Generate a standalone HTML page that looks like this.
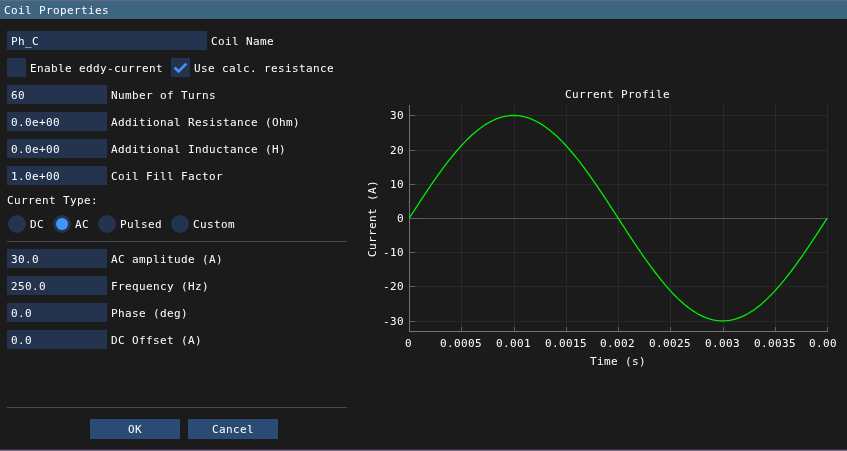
<!DOCTYPE html>
<html lang="en"><head><meta charset="utf-8"><title>Coil Properties</title>
<style>
html,body{margin:0;padding:0;background:#1b1b1b;}
body{width:847px;height:451px;overflow:hidden;position:relative;font-family:"DejaVu Sans Mono", "Liberation Mono", monospace;font-size:11px;color:#ffffff;}
#w{position:absolute;left:0;top:0;width:847px;height:451px;overflow:hidden;background:#1b1b1b;}
#tx{position:absolute;left:0;top:0;width:847px;height:451px;will-change:transform;}
.t{position:absolute;white-space:pre;line-height:13px;height:13px;letter-spacing:0.3775px;font-kerning:none;font-variant-ligatures:none;margin-top:1px;}
.f{position:absolute;background:#24344e;}
.sep{position:absolute;height:1px;background:#47474f;}
#titlebar{position:absolute;left:0;top:0;width:847px;height:19px;background:#3e6580;}
#topedge{position:absolute;left:0;top:0;width:847px;height:1px;background:#5c6a84;}
#botedge{position:absolute;left:0;top:449px;width:847px;height:2px;background:linear-gradient(#3a363f 0,#3a363f 50%,#786a82 50%,#786a82 100%);}
svg{position:absolute;left:0;top:0;}
svg text{font-family:"DejaVu Sans Mono", "Liberation Mono", monospace;font-size:11px;fill:#ffffff;letter-spacing:0.3775px;}

</style></head><body><div id="w">
<div id="titlebar"></div><div id="topedge"></div>
<div class="f" style="left:7px;top:31px;width:200px;height:19px;"></div>
<div class="f" style="left:7px;top:58px;width:19px;height:19px;"></div>
<div class="f" style="left:171px;top:58px;width:19px;height:19px;"></div>
<div class="f" style="left:7px;top:85px;width:100px;height:19px;"></div>
<div class="f" style="left:7px;top:112px;width:100px;height:19px;"></div>
<div class="f" style="left:7px;top:139px;width:100px;height:19px;"></div>
<div class="f" style="left:7px;top:166px;width:100px;height:19px;"></div>
<div class="sep" style="left:7px;top:241px;width:340px"></div>
<div class="f" style="left:7px;top:249px;width:100px;height:19px;"></div>
<div class="f" style="left:7px;top:276px;width:100px;height:19px;"></div>
<div class="f" style="left:7px;top:303px;width:100px;height:19px;"></div>
<div class="f" style="left:7px;top:330px;width:100px;height:19px;"></div>
<div class="sep" style="left:7px;top:407px;width:340px"></div>
<div class="f" style="left:90px;top:419px;width:90px;height:20px;background:#2a4c74;"></div>
<div class="f" style="left:188px;top:419px;width:90px;height:20px;background:#2a4c74;"></div>
<svg width="847" height="451" viewBox="0 0 847 451" shape-rendering="auto">
<path d="M174.65 67.5 L178.55 71.4 L186.35 63.6" fill="none" stroke="#4296fa" stroke-width="2.6" stroke-linejoin="miter"/>
<circle cx="17" cy="224" r="9" fill="#24344e"/>
<circle cx="62" cy="224" r="9" fill="#24344e"/>
<circle cx="107" cy="224" r="9" fill="#24344e"/>
<circle cx="180" cy="224" r="9" fill="#24344e"/>
<circle cx="62" cy="224" r="6" fill="#4296fa"/>
<path d="M461.5 105V331M514.5 105V331M566.5 105V331M618.5 105V331M670.5 105V331M723.5 105V331M775.5 105V331M827.5 105V331M409 115.5H828M409 150.5H828M409 184.5H828M409 252.5H828M409 286.5H828M409 321.5H828" stroke="#292929" stroke-width="1" fill="none" shape-rendering="crispEdges"/>
<path d="M409 218.5H828" stroke="#565656" stroke-width="1" shape-rendering="crispEdges"/>
<path d="M461.5 327V332M514.5 327V332M566.5 327V332M618.5 327V332M670.5 327V332M723.5 327V332M775.5 327V332M827.5 327V332M409 115.5H415M409 150.5H415M409 184.5H415M409 218.5H420M409 252.5H415M409 286.5H415M409 321.5H415" stroke="#606060" stroke-width="1" fill="none" shape-rendering="crispEdges"/>
<path d="M409.5 105V332M409 331.5H828" stroke="#747474" stroke-width="1" fill="none" shape-rendering="crispEdges"/>
<polyline points="409.20,218.20 411.29,214.97 413.38,211.75 415.47,208.53 417.56,205.32 419.65,202.13 421.74,198.95 423.83,195.79 425.92,192.65 428.01,189.54 430.10,186.46 432.19,183.40 434.28,180.38 436.37,177.40 438.46,174.46 440.55,171.56 442.64,168.71 444.73,165.91 446.82,163.16 448.91,160.46 451.00,157.82 453.09,155.24 455.18,152.72 457.27,150.27 459.36,147.88 461.45,145.56 463.54,143.32 465.63,141.14 467.72,139.05 469.81,137.03 471.90,135.09 473.99,133.24 476.08,131.46 478.17,129.78 480.26,128.18 482.35,126.67 484.44,125.25 486.53,123.92 488.62,122.69 490.71,121.55 492.80,120.50 494.89,119.55 496.98,118.70 499.07,117.95 501.16,117.29 503.25,116.74 505.34,116.28 507.43,115.93 509.52,115.68 511.61,115.52 513.70,115.47 515.79,115.52 517.88,115.68 519.97,115.93 522.06,116.28 524.15,116.74 526.24,117.29 528.33,117.95 530.42,118.70 532.51,119.55 534.60,120.50 536.69,121.55 538.78,122.69 540.87,123.92 542.96,125.25 545.05,126.67 547.14,128.18 549.23,129.78 551.32,131.46 553.41,133.24 555.50,135.09 557.59,137.03 559.68,139.05 561.77,141.14 563.86,143.32 565.95,145.56 568.04,147.88 570.13,150.27 572.22,152.72 574.31,155.24 576.40,157.82 578.49,160.46 580.58,163.16 582.67,165.91 584.76,168.71 586.85,171.56 588.94,174.46 591.03,177.40 593.12,180.38 595.21,183.40 597.30,186.46 599.39,189.54 601.48,192.65 603.57,195.79 605.66,198.95 607.75,202.13 609.84,205.32 611.93,208.53 614.02,211.75 616.11,214.97 618.20,218.20 620.29,221.43 622.38,224.65 624.47,227.87 626.56,231.08 628.65,234.27 630.74,237.45 632.83,240.61 634.92,243.75 637.01,246.86 639.10,249.94 641.19,253.00 643.28,256.02 645.37,259.00 647.46,261.94 649.55,264.84 651.64,267.69 653.73,270.49 655.82,273.24 657.91,275.94 660.00,278.58 662.09,281.16 664.18,283.68 666.27,286.13 668.36,288.52 670.45,290.84 672.54,293.08 674.63,295.26 676.72,297.35 678.81,299.37 680.90,301.31 682.99,303.16 685.08,304.94 687.17,306.62 689.26,308.22 691.35,309.73 693.44,311.15 695.53,312.48 697.62,313.71 699.71,314.85 701.80,315.90 703.89,316.85 705.98,317.70 708.07,318.45 710.16,319.11 712.25,319.66 714.34,320.12 716.43,320.47 718.52,320.72 720.61,320.88 722.70,320.93 724.79,320.88 726.88,320.72 728.97,320.47 731.06,320.12 733.15,319.66 735.24,319.11 737.33,318.45 739.42,317.70 741.51,316.85 743.60,315.90 745.69,314.85 747.78,313.71 749.87,312.48 751.96,311.15 754.05,309.73 756.14,308.22 758.23,306.62 760.32,304.94 762.41,303.16 764.50,301.31 766.59,299.37 768.68,297.35 770.77,295.26 772.86,293.08 774.95,290.84 777.04,288.52 779.13,286.13 781.22,283.68 783.31,281.16 785.40,278.58 787.49,275.94 789.58,273.24 791.67,270.49 793.76,267.69 795.85,264.84 797.94,261.94 800.03,259.00 802.12,256.02 804.21,253.00 806.30,249.94 808.39,246.86 810.48,243.75 812.57,240.61 814.66,237.45 816.75,234.27 818.84,231.08 820.93,227.87 823.02,224.65 825.11,221.43 827.20,218.20" fill="none" stroke="#00ee00" stroke-width="1.3" stroke-linejoin="round"/>
</svg>
<div id="tx">
<div class="t " style="left:4px;top:3px;">Coil Properties</div>
<div class="t " style="left:11px;top:34px;">Ph_C</div>
<div class="t " style="left:211px;top:34px;">Coil Name</div>
<div class="t " style="left:30px;top:61px;">Enable eddy-current</div>
<div class="t " style="left:194px;top:61px;">Use calc. resistance</div>
<div class="t " style="left:11px;top:88px;">60</div>
<div class="t " style="left:111px;top:88px;">Number of Turns</div>
<div class="t " style="left:11px;top:115px;">0.0e+00</div>
<div class="t " style="left:111px;top:115px;">Additional Resistance (Ohm)</div>
<div class="t " style="left:11px;top:142px;">0.0e+00</div>
<div class="t " style="left:111px;top:142px;">Additional Inductance (H)</div>
<div class="t " style="left:11px;top:169px;">1.0e+00</div>
<div class="t " style="left:111px;top:169px;">Coil Fill Factor</div>
<div class="t " style="left:7px;top:193px;">Current Type:</div>
<div class="t " style="left:30px;top:217px;">DC</div>
<div class="t " style="left:75px;top:217px;">AC</div>
<div class="t " style="left:120px;top:217px;">Pulsed</div>
<div class="t " style="left:193px;top:217px;">Custom</div>
<div class="t " style="left:11px;top:252px;">30.0</div>
<div class="t " style="left:111px;top:252px;">AC amplitude (A)</div>
<div class="t " style="left:11px;top:279px;">250.0</div>
<div class="t " style="left:111px;top:279px;">Frequency (Hz)</div>
<div class="t " style="left:11px;top:306px;">0.0</div>
<div class="t " style="left:111px;top:306px;">Phase (deg)</div>
<div class="t " style="left:11px;top:333px;">0.0</div>
<div class="t " style="left:111px;top:333px;">DC Offset (A)</div>
<div class="t " style="left:128px;top:422px;">OK</div>
<div class="t " style="left:212px;top:422px;">Cancel</div>
<div class="t " style="left:565px;top:87px;">Current Profile</div>
<div class="t " style="left:590px;top:354px;">Time (s)</div>
<div class="t " style="left:405px;top:336px;">0</div>
<div class="t " style="left:440px;top:336px;">0.0005</div>
<div class="t " style="left:496px;top:336px;">0.001</div>
<div class="t " style="left:545px;top:336px;">0.0015</div>
<div class="t " style="left:600px;top:336px;">0.002</div>
<div class="t " style="left:649px;top:336px;">0.0025</div>
<div class="t " style="left:705px;top:336px;">0.003</div>
<div class="t " style="left:754px;top:336px;">0.0035</div>
<div style="position:absolute;left:809px;top:330px;width:28px;height:24px;overflow:hidden"><div class="t" style="left:0;top:6px">0.004</div></div>
<div class="t " style="left:390px;top:108px;">30</div>
<div class="t " style="left:390px;top:143px;">20</div>
<div class="t " style="left:390px;top:177px;">10</div>
<div class="t " style="left:397px;top:211px;">0</div>
<div class="t " style="left:383px;top:245px;">-10</div>
<div class="t " style="left:383px;top:279px;">-20</div>
<div class="t " style="left:383px;top:314px;">-30</div>
<div class="t" style="left:366px;top:255.5px;width:77px;transform-origin:0 0;transform:rotate(-90deg);">Current (A)</div>
</div>
<div id="botedge"></div>
</div></body></html>
